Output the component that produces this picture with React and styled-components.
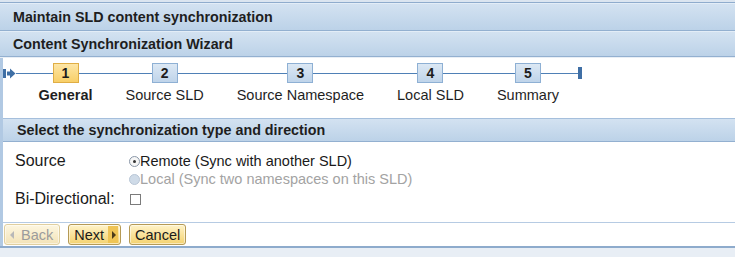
import styled, { createGlobalStyle } from "styled-components";

const GlobalStyle = createGlobalStyle`
  body {
    margin: 0;
    background: #ffffff;
    font-family: "Liberation Sans", Arial, sans-serif;
    color: #1b1b1b;
  }
`;

const steps = [
  { num: 1, label: "General" },
  { num: 2, label: "Source SLD" },
  { num: 3, label: "Source Namespace" },
  { num: 4, label: "Local SLD" },
  { num: 5, label: "Summary" },
];

const App = () => {
  return (
    <Page>
      <GlobalStyle />
      <TopStrip />
      <TitleBar>Maintain SLD content synchronization</TitleBar>
      <TitleBar $sub>Content Synchronization Wizard</TitleBar>
      <Body>
        <Roadmap>
          <Track>
            <StartIcon>
              <svg width="13" height="11" viewBox="0 0 13 11">
                <rect x="0" y="1" width="3" height="9" fill="#3f6fa5" />
                <path d="M4 3.5 H7 V0.5 L12.5 5.5 L7 10.5 V7.5 H4 Z" fill="#3f6fa5" />
              </svg>
            </StartIcon>
            {steps.map((s, i) => (
              <Step key={s.num}>
                <StepBox $active={i === 0}>{s.num}</StepBox>
                <StepLabel $active={i === 0}>{s.label}</StepLabel>
              </Step>
            ))}
            <EndIcon />
          </Track>
        </Roadmap>
        <SectionHeader>Select the synchronization type and direction</SectionHeader>
        <FormGrid>
          <FieldLabel $rows={2}>Source</FieldLabel>
          <Choice>
            <Radio $checked />
            Remote (Sync with another SLD)
          </Choice>
          <Choice $disabled>
            <Radio $disabled />
            Local (Sync two namespaces on this SLD)
          </Choice>
          <FieldLabel $tall>Bi-Directional:</FieldLabel>
          <Choice $tall>
            <Checkbox />
          </Choice>
        </FormGrid>
        <ButtonBar>
          <Button disabled $back>
            <Arrow $left $disabled />
            Back
          </Button>
          <Button>
            Next
            <ArrowCap>
              <Arrow />
            </ArrowCap>
          </Button>
          <Button>Cancel</Button>
        </ButtonBar>
      </Body>
      <Footer />
    </Page>
  );
};

export default App;

const Page = styled.div`
  width: 735px;
  height: 257px;
  display: flex;
  flex-direction: column;
  overflow: hidden;
  background: #e8eef5;
`;

const TopStrip = styled.div`
  height: 2px;
  background: #dbe5f0;
  border-bottom: 1px solid #8faccd;
`;

const TitleBar = styled.div`
  height: ${(p) => (p.$sub ? "24px" : "26px")};
  display: flex;
  align-items: center;
  padding-left: 13px;
  font-size: 14.3px;
  font-weight: bold;
  color: #1e1e1e;
  background: linear-gradient(#d3e2f1, #bcd2e8);
  border-top: 1px solid #e3edf7;
  border-bottom: 1px solid #93b0d0;
`;

const Body = styled.div`
  margin-top: 1px;
  background: #ffffff;
  border-left: 3px solid #b1c9e3;
  display: flex;
  flex-direction: column;
`;

const Roadmap = styled.div`
  height: 60px;
  padding-top: 5px;
  box-sizing: border-box;
`;

const Track = styled.div`
  position: relative;
  display: inline-flex;
  align-items: flex-start;

  &::before {
    content: "";
    position: absolute;
    left: 13px;
    right: 4px;
    top: 10px;
    height: 1px;
    background: #4f80b6;
  }
`;

const StartIcon = styled.div`
  position: relative;
  width: 13px;
  height: 11px;
  margin-top: 5px;
  margin-right: 6px;

  svg {
    display: block;
  }
`;

const Step = styled.div`
  position: relative;
  display: flex;
  flex-direction: column;
  align-items: center;
  padding: 0 16.5px;
`;

const StepBox = styled.div`
  width: 26px;
  height: 20px;
  box-sizing: border-box;
  display: flex;
  align-items: center;
  justify-content: center;
  font-size: 14px;
  font-weight: bold;
  color: #1c1c1c;
  border: 1px solid ${(p) => (p.$active ? "#e0ae45" : "#8eb0d4")};
  background: ${(p) =>
    p.$active
      ? "linear-gradient(#fde6a6, #f8cf68)"
      : "linear-gradient(#dce8f4, #bfd4ea)"};
`;

const StepLabel = styled.div`
  margin-top: 4px;
  font-size: 14.5px;
  line-height: 16px;
  white-space: nowrap;
  font-weight: ${(p) => (p.$active ? "bold" : "normal")};
  color: #1f1f1f;
`;

const EndIcon = styled.div`
  position: relative;
  width: 7px;
  height: 12px;
  margin-top: 4px;

  &::after {
    content: "";
    position: absolute;
    right: 0;
    top: 0;
    width: 4px;
    height: 12px;
    background: #3f6fa5;
  }
`;

const SectionHeader = styled.div`
  height: 22px;
  display: flex;
  align-items: center;
  padding-left: 14px;
  font-size: 14.3px;
  font-weight: bold;
  color: #1e1e1e;
  background: linear-gradient(#d3e2f1, #bcd2e8);
  border-top: 1px solid #a5bfdc;
  border-bottom: 1px solid #93b0d0;
`;

const FormGrid = styled.div`
  display: grid;
  grid-template-columns: 114px auto;
  align-content: start;
  height: 80px;
  box-sizing: border-box;
  padding: 10px 0 0 12px;
`;

const FieldLabel = styled.div`
  grid-row: span ${(p) => p.$rows || 1};
  font-size: 16px;
  line-height: ${(p) => (p.$tall ? "22px" : "18px")};
  color: #1a1a1a;
`;

const Choice = styled.div`
  display: flex;
  align-items: center;
  height: ${(p) => (p.$tall ? "22px" : "18px")};
  font-size: 14.5px;
  color: ${(p) => (p.$disabled ? "#a3a3a3" : "#1a1a1a")};
`;

const Radio = styled.span`
  position: relative;
  width: 11px;
  height: 11px;
  box-sizing: border-box;
  border-radius: 50%;
  border: 1px solid ${(p) => (p.$disabled ? "#b9c6d6" : "#8a97a8")};
  background: ${(p) => (p.$disabled ? "#cfdbe8" : "#f6f6f6")};

  &::after {
    content: "";
    display: ${(p) => (p.$checked ? "block" : "none")};
    position: absolute;
    left: 3px;
    top: 3px;
    width: 3px;
    height: 3px;
    border-radius: 50%;
    background: #333;
  }
`;

const Checkbox = styled.span`
  width: 11px;
  height: 11px;
  box-sizing: border-box;
  border: 1px solid #7b7b7b;
  background: #ffffff;
  margin-left: 1px;
`;

const ButtonBar = styled.div`
  display: flex;
  gap: 8px;
  align-items: flex-start;
  height: 24px;
  box-sizing: border-box;
  padding: 1px 0 0 1px;
  border-top: 1px solid #b6cbe3;
`;

const Button = styled.button`
  display: flex;
  align-items: center;
  gap: ${(p) => (p.$back ? "7px" : "4px")};
  height: 21px;
  padding: ${(p) => (p.$back ? "0 6px 0 5px" : "0 5px")};
  font-family: "Liberation Sans", Arial, sans-serif;
  font-size: 14.5px;
  color: ${(p) => (p.disabled ? "#9c9c9c" : "#1a1a1a")};
  border: 1px solid ${(p) => (p.disabled ? "#e0cf9f" : "#b59a55")};
  border-radius: 3px;
  background: ${(p) =>
    p.disabled
      ? "linear-gradient(#fdf6e0, #f3e3b8)"
      : "linear-gradient(#fff3c8, #f4d270)"};
  box-shadow: inset 0 0 0 1px rgba(255, 255, 255, 0.5);
`;

const ArrowCap = styled.span`
  display: flex;
  align-items: center;
  height: 17px;
  padding: 0 2px 0 4px;
  margin-right: -3px;
  background: #efc455;
`;

const Arrow = styled.span`
  width: 0;
  height: 0;
  border-top: 4px solid transparent;
  border-bottom: 4px solid transparent;
  ${(p) =>
    p.$left
      ? `border-right: 4px solid ${p.$disabled ? "#b8b8b8" : "#3a3a3a"};`
      : `border-left: 4px solid #4a3a1a;`}
`;

const Footer = styled.div`
  height: 2px;
  background: #8eabcc;
`;
